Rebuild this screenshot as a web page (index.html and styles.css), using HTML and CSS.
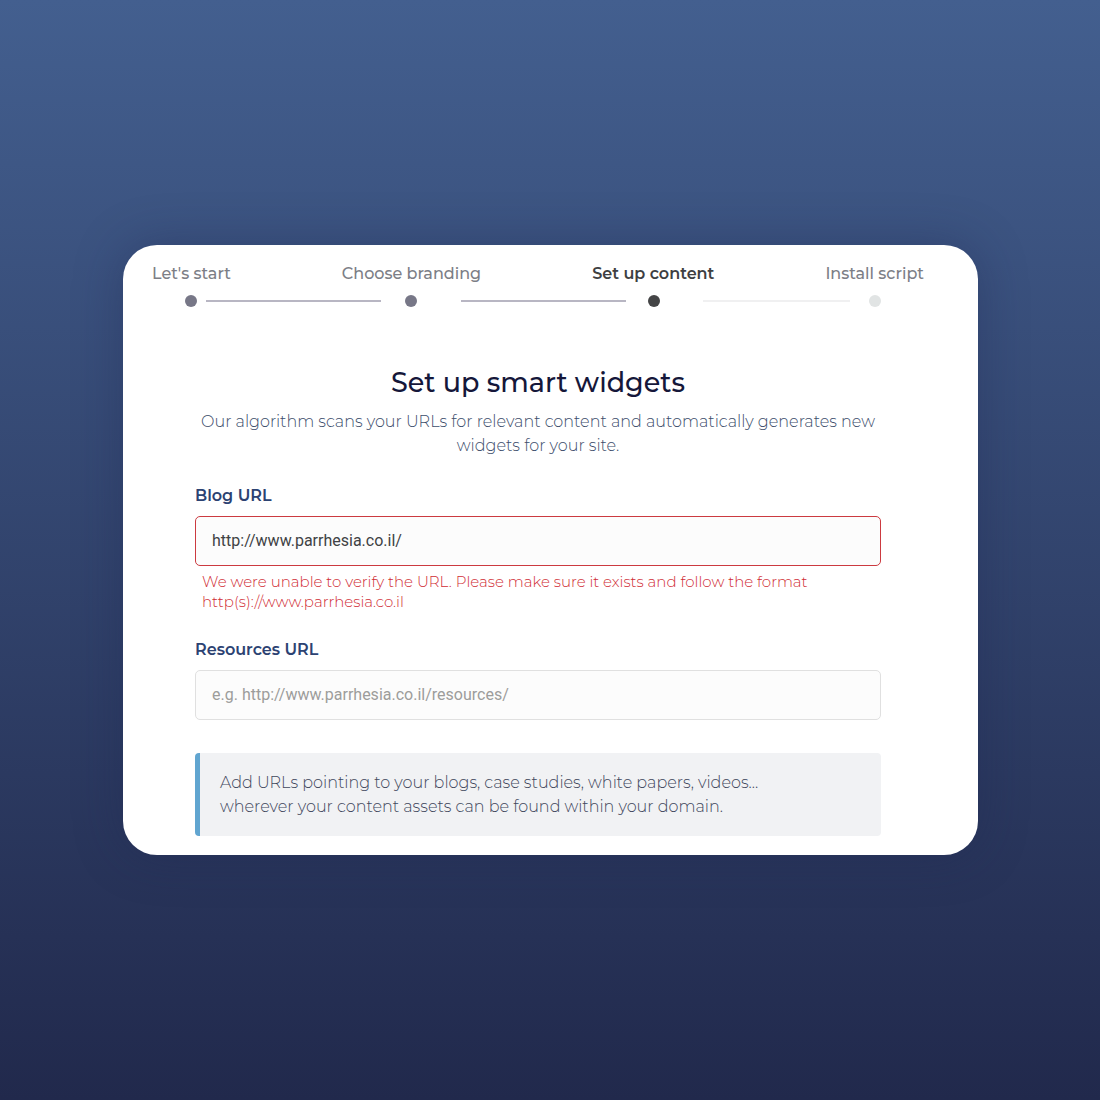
FILE: index.html
```html
<!DOCTYPE html>
<html lang="en">
<head>
<meta charset="utf-8">
<meta name="viewport" content="width=device-width, initial-scale=1">
<title>Set up smart widgets</title>
<link rel="stylesheet" href="styles.css">
</head>
<body>
<main class="card">
  <nav class="stepper" aria-label="Setup progress">
    <ol class="step-labels">
      <li class="step">Let's start</li>
      <li class="step">Choose branding</li>
      <li class="step step-current" aria-current="step">Set up content</li>
      <li class="step">Install script</li>
    </ol>
    <div class="track" aria-hidden="true">
      <span class="dot"></span>
      <span class="line line-first"></span>
      <span class="dot"></span>
      <span class="line line-second"></span>
      <span class="dot dot-current"></span>
      <span class="line line-third"></span>
      <span class="dot dot-pending"></span>
    </div>
  </nav>
  <form class="form" novalidate>
    <h1 class="title">Set up smart widgets</h1>
    <p class="intro">Our algorithm scans your URLs for relevant content and automatically generates new widgets for your site.</p>
    <div class="field">
      <label class="label" for="blog">Blog URL</label>
      <input class="input input-invalid" id="blog" type="url" value="http://www.parrhesia.co.il/" aria-invalid="true" aria-describedby="blog-error">
      <p class="error" id="blog-error">We were unable to verify the URL. Please make sure it exists and follow the format http(s)://www.parrhesia.co.il</p>
    </div>
    <div class="field">
      <label class="label" for="resources">Resources URL</label>
      <input class="input" id="resources" type="url" placeholder="e.g. http://www.parrhesia.co.il/resources/">
    </div>
    <p class="note">Add URLs pointing to your blogs, case studies, white papers, videos...<br>wherever your content assets can be found within your domain.</p>
  </form>
</main>
</body>
</html>
```
FILE: styles.css
```css
* {
  box-sizing: border-box;
}

body {
  margin: 0;
  min-height: 100vh;
  padding: 24px 122px 24px 123px;
  display: flex;
  align-items: center;
  justify-content: center;
  background: linear-gradient(180deg, #435f8f, #21294c);
  font-family: Montserrat, Inter, "Open Sans", sans-serif;
  font-size: 16px;
  line-height: 24px;
}

.card {
  width: 100%;
  max-width: 960px;
  padding: 17px 25px 19px 0;
  border-radius: 34px;
  background: #fff;
  box-shadow: 0 0 48px rgba(30, 36, 76, 0.35);
}

.stepper {
  padding: 0 29px;
}

.step-labels {
  display: flex;
  justify-content: space-between;
  margin: 0 0 9px;
  padding: 0;
  list-style: none;
}

.step {
  color: #7c7e86;
  font-weight: 500;
  white-space: nowrap;
}

.step-current {
  color: #3e3f42;
  font-weight: 600;
}

.track {
  display: flex;
  align-items: center;
  padding: 0 43px 0 33px;
}

.dot {
  flex: none;
  width: 12px;
  height: 12px;
  border-radius: 50%;
  background: #777787;
}

.dot-current {
  background: #444546;
}

.dot-pending {
  background: #e1e4e4;
}

.line {
  height: 2px;
  background: #b8b6c3;
}

.line-first {
  flex: 175 1 0;
  margin: 0 24px 0 9px;
}

.line-second {
  flex: 165 1 0;
  margin: 0 22px 0 44px;
}

.line-third {
  flex: 147 1 0;
  margin: 0 19px 0 43px;
  background: #f0f0f1;
}

.form {
  padding: 58px 72px 0;
}

.title {
  margin: 0 0 9px;
  color: #15173a;
  font-size: 27px;
  font-weight: 500;
  line-height: 36px;
  text-align: center;
}

.intro {
  margin: 0 0 26px;
  color: #3c4d6b;
  font-weight: 300;
  text-align: center;
}

.field {
  margin-bottom: 26px;
}

.label {
  display: block;
  margin-bottom: 8px;
  color: #2c4272;
  font-weight: 600;
}

.input {
  display: block;
  width: 100%;
  height: 50px;
  padding: 0 16px 2px;
  border: 1px solid #e0e0e0;
  border-radius: 5px;
  background: #fcfcfc;
  color: #404244;
  font-family: Roboto, sans-serif;
  font-size: 16px;
}

.input::placeholder {
  color: #9d9d9b;
  opacity: 1;
}

.input-invalid {
  border-color: #cc3a40;
}

.error {
  margin: 6px 0 0;
  padding: 0 7px;
  color: #d02c34;
  font-size: 15px;
  font-weight: 300;
  line-height: 20px;
}

.note {
  margin: 33px 0 0;
  padding: 18px 20px 17px;
  border-left: 5px solid #61a5d0;
  border-radius: 4px;
  background: #f1f2f4;
  color: #3f475c;
  font-weight: 300;
}
```
